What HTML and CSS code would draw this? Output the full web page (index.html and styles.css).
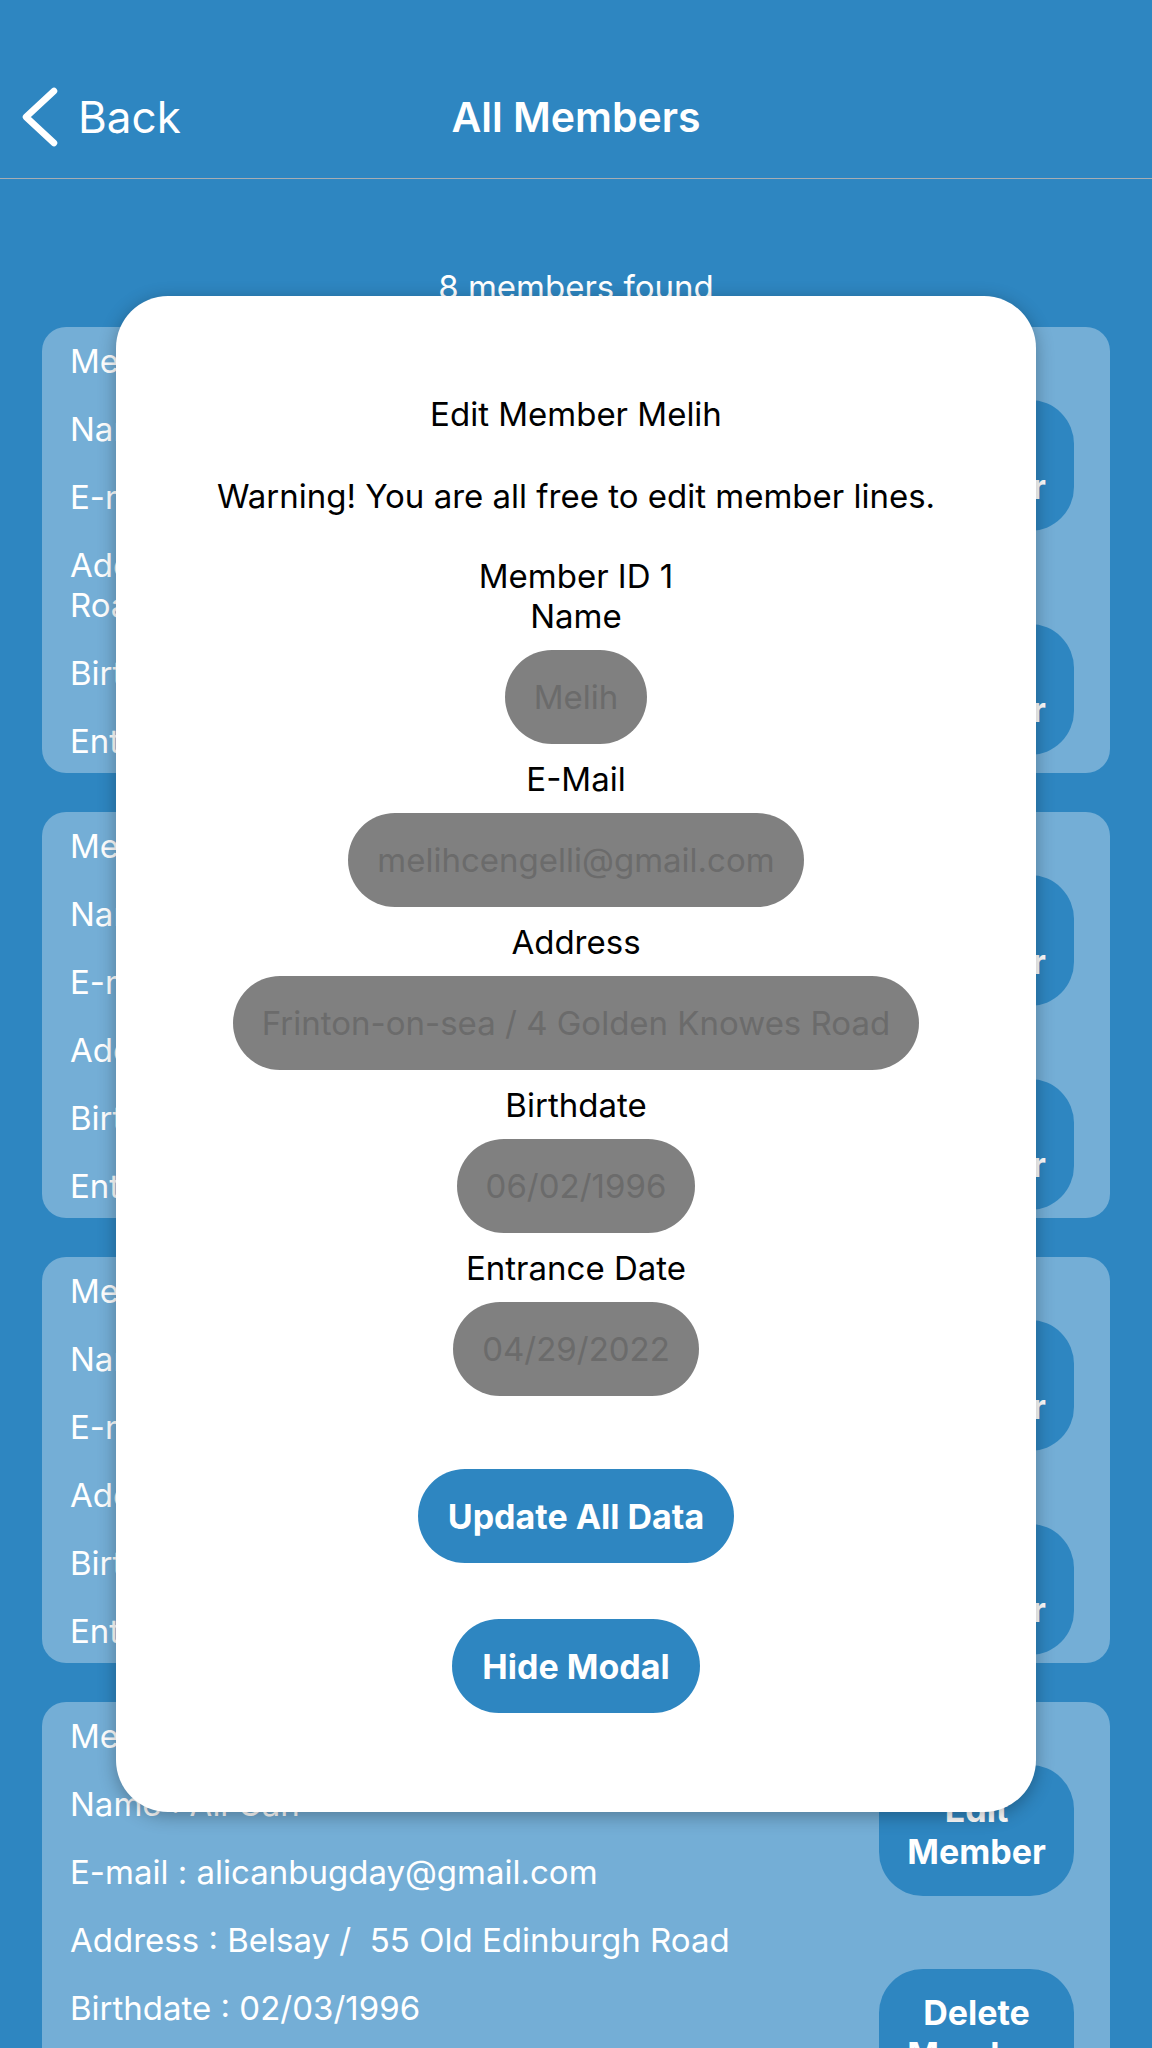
FILE: index.html
```html
<!DOCTYPE html>
<html lang="en">
<head>
<meta charset="utf-8">
<title>All Members</title>
<link rel="stylesheet" href="styles.css">
</head>
<body>
<div class="screen">
  <header class="nav">
    <a class="back">
      <svg class="chev" width="40" height="60" viewBox="0 0 40 60" aria-hidden="true"><path d="M34 4 L6 30 L34 56" fill="none" stroke="#fff" stroke-width="6.5" stroke-linecap="round" stroke-linejoin="round"/></svg>
      <span>Back</span>
    </a>
    <h1 class="title">All Members</h1>
    <span></span>
  </header>

  <main class="content">
    <p class="count">8 members found</p>
    <div class="list">
      <div class="card">
        <div class="info">
          <p>Member ID : 1</p>
          <p>Name : Melih</p>
          <p>E-mail : melihcengelli@gmail.com</p>
          <p>Address : Frinton-on-sea / 4 Golden Knowes<br>Road</p>
          <p>Birthdate : 06/02/1996</p>
          <p>Entrance Date : 04/29/2022</p>
        </div>
        <div class="actions">
          <button class="card-btn">Edit<br>Member</button>
          <button class="card-btn">Delete<br>Member</button>
        </div>
      </div>
      <div class="card">
        <div class="info">
          <p>Member ID : 2</p>
          <p>Name : Mert Yilmaz</p>
          <p>E-mail : mertyilmaz@gmail.com</p>
          <p>Address : Ashby / 12 Station Road</p>
          <p>Birthdate : 11/14/1995</p>
          <p>Entrance Date : 04/29/2022</p>
        </div>
        <div class="actions">
          <button class="card-btn">Edit<br>Member</button>
          <button class="card-btn">Delete<br>Member</button>
        </div>
      </div>
      <div class="card">
        <div class="info">
          <p>Member ID : 3</p>
          <p>Name : Ayse Demir</p>
          <p>E-mail : aysedemir@gmail.com</p>
          <p>Address : Leeds / 8 Park Lane</p>
          <p>Birthdate : 09/21/1997</p>
          <p>Entrance Date : 04/29/2022</p>
        </div>
        <div class="actions">
          <button class="card-btn">Edit<br>Member</button>
          <button class="card-btn">Delete<br>Member</button>
        </div>
      </div>
      <div class="card">
        <div class="info">
          <p>Member ID : 4</p>
          <p>Name : Ali Can</p>
          <p>E-mail : alicanbugday@gmail.com</p>
          <p>Address : Belsay / &nbsp;55 Old Edinburgh Road</p>
          <p>Birthdate : 02/03/1996</p>
          <p>Entrance Date : 04/29/2022</p>
        </div>
        <div class="actions">
          <button class="card-btn">Edit<br>Member</button>
          <button class="card-btn">Delete<br>Member</button>
        </div>
      </div>
    </div>
  </main>

  <div class="overlay">
    <div class="modal">
      <p class="m-title">Edit Member Melih</p>
      <p class="m-warn">Warning! You are all free to edit member lines.</p>
      <p>Member ID 1</p>
      <p>Name</p>
      <div class="field"><span>Melih</span></div>
      <p>E-Mail</p>
      <div class="field"><span>melihcengelli@gmail.com</span></div>
      <p>Address</p>
      <div class="field"><span>Frinton-on-sea / 4 Golden Knowes Road</span></div>
      <p>Birthdate</p>
      <div class="field"><span>06/02/1996</span></div>
      <p>Entrance Date</p>
      <div class="field"><span>04/29/2022</span></div>
      <button class="m-btn update">Update All Data</button>
      <button class="m-btn hide">Hide Modal</button>
    </div>
  </div>
</div>
</body>
</html>
```

FILE: styles.css
```css
* {
  box-sizing: border-box;
  margin: 0;
  padding: 0;
}

html, body {
  background: #2e86c1;
}

body {
  font-family: Inter, "Noto Sans", sans-serif;
  color: #fff;
}

.screen {
  position: relative;
  width: 1152px;
  height: 2048px;
  overflow: hidden;
  background: #2e86c1;
}

/* ---------- navigation bar ---------- */
.nav {
  display: grid;
  grid-template-columns: 1fr auto 1fr;
  align-items: center;
  height: 179px;
  padding-top: 56px;
  border-bottom: 1px solid #a7adb3;
}

.back {
  display: flex;
  align-items: center;
  gap: 18px;
  padding-left: 20px;
  font-size: 44px;
  color: #fff;
}

.chev {
  display: block;
}

.title {
  font-size: 41px;
  font-weight: 600;
  text-align: center;
}

/* ---------- list ---------- */
.count {
  margin-top: 88px;
  margin-bottom: 20px;
  font-size: 33px;
  line-height: 40px;
  text-align: center;
}

.list {
  display: flex;
  flex-direction: column;
  gap: 39px;
  padding: 0 42px;
}

.card {
  display: flex;
  background: #74aed6;
  border-radius: 24px;
  padding: 14px 36px 12px 28px;
}

.info {
  flex: 1;
  display: flex;
  flex-direction: column;
  gap: 28px;
  font-size: 33px;
  line-height: 40px;
}

.actions {
  display: flex;
  flex-direction: column;
  justify-content: space-around;
  margin: 13px 0 -40px;
}

.card-btn {
  width: 195px;
  padding: 23.5px 0;
  border: 0;
  border-radius: 44px;
  background: #2e86c1;
  color: #fff;
  font-family: inherit;
  font-size: 34px;
  font-weight: 700;
  line-height: 42px;
  text-align: center;
}

/* ---------- modal ---------- */
.overlay {
  position: absolute;
  inset: 0;
  display: flex;
  justify-content: center;
  align-items: flex-start;
  padding-top: 296px;
}

.modal {
  width: 920px;
  display: flex;
  flex-direction: column;
  align-items: center;
  padding: 98px 0 99px;
  background: #fff;
  border-radius: 52px;
  box-shadow: 0 4px 18px rgba(0, 0, 0, 0.3);
  color: #000;
  font-size: 33px;
  line-height: 40px;
  text-align: center;
}

.m-title {
  margin-bottom: 42px;
}

.m-warn {
  margin-bottom: 40px;
}

.field {
  display: flex;
  align-items: center;
  justify-content: center;
  height: 94px;
  margin: 14px 0 15px;
  padding: 0 29px;
  border-radius: 47px;
  background: #808080;
  color: #6b6b6b;
  font-size: 33px;
  white-space: nowrap;
}

.m-btn {
  height: 94px;
  padding: 0 30px;
  border: 0;
  border-radius: 47px;
  background: #2e86c1;
  color: #fff;
  font-family: inherit;
  font-size: 34px;
  font-weight: 700;
}

.update {
  margin-top: 58px;
}

.hide {
  margin-top: 56px;
}
```
